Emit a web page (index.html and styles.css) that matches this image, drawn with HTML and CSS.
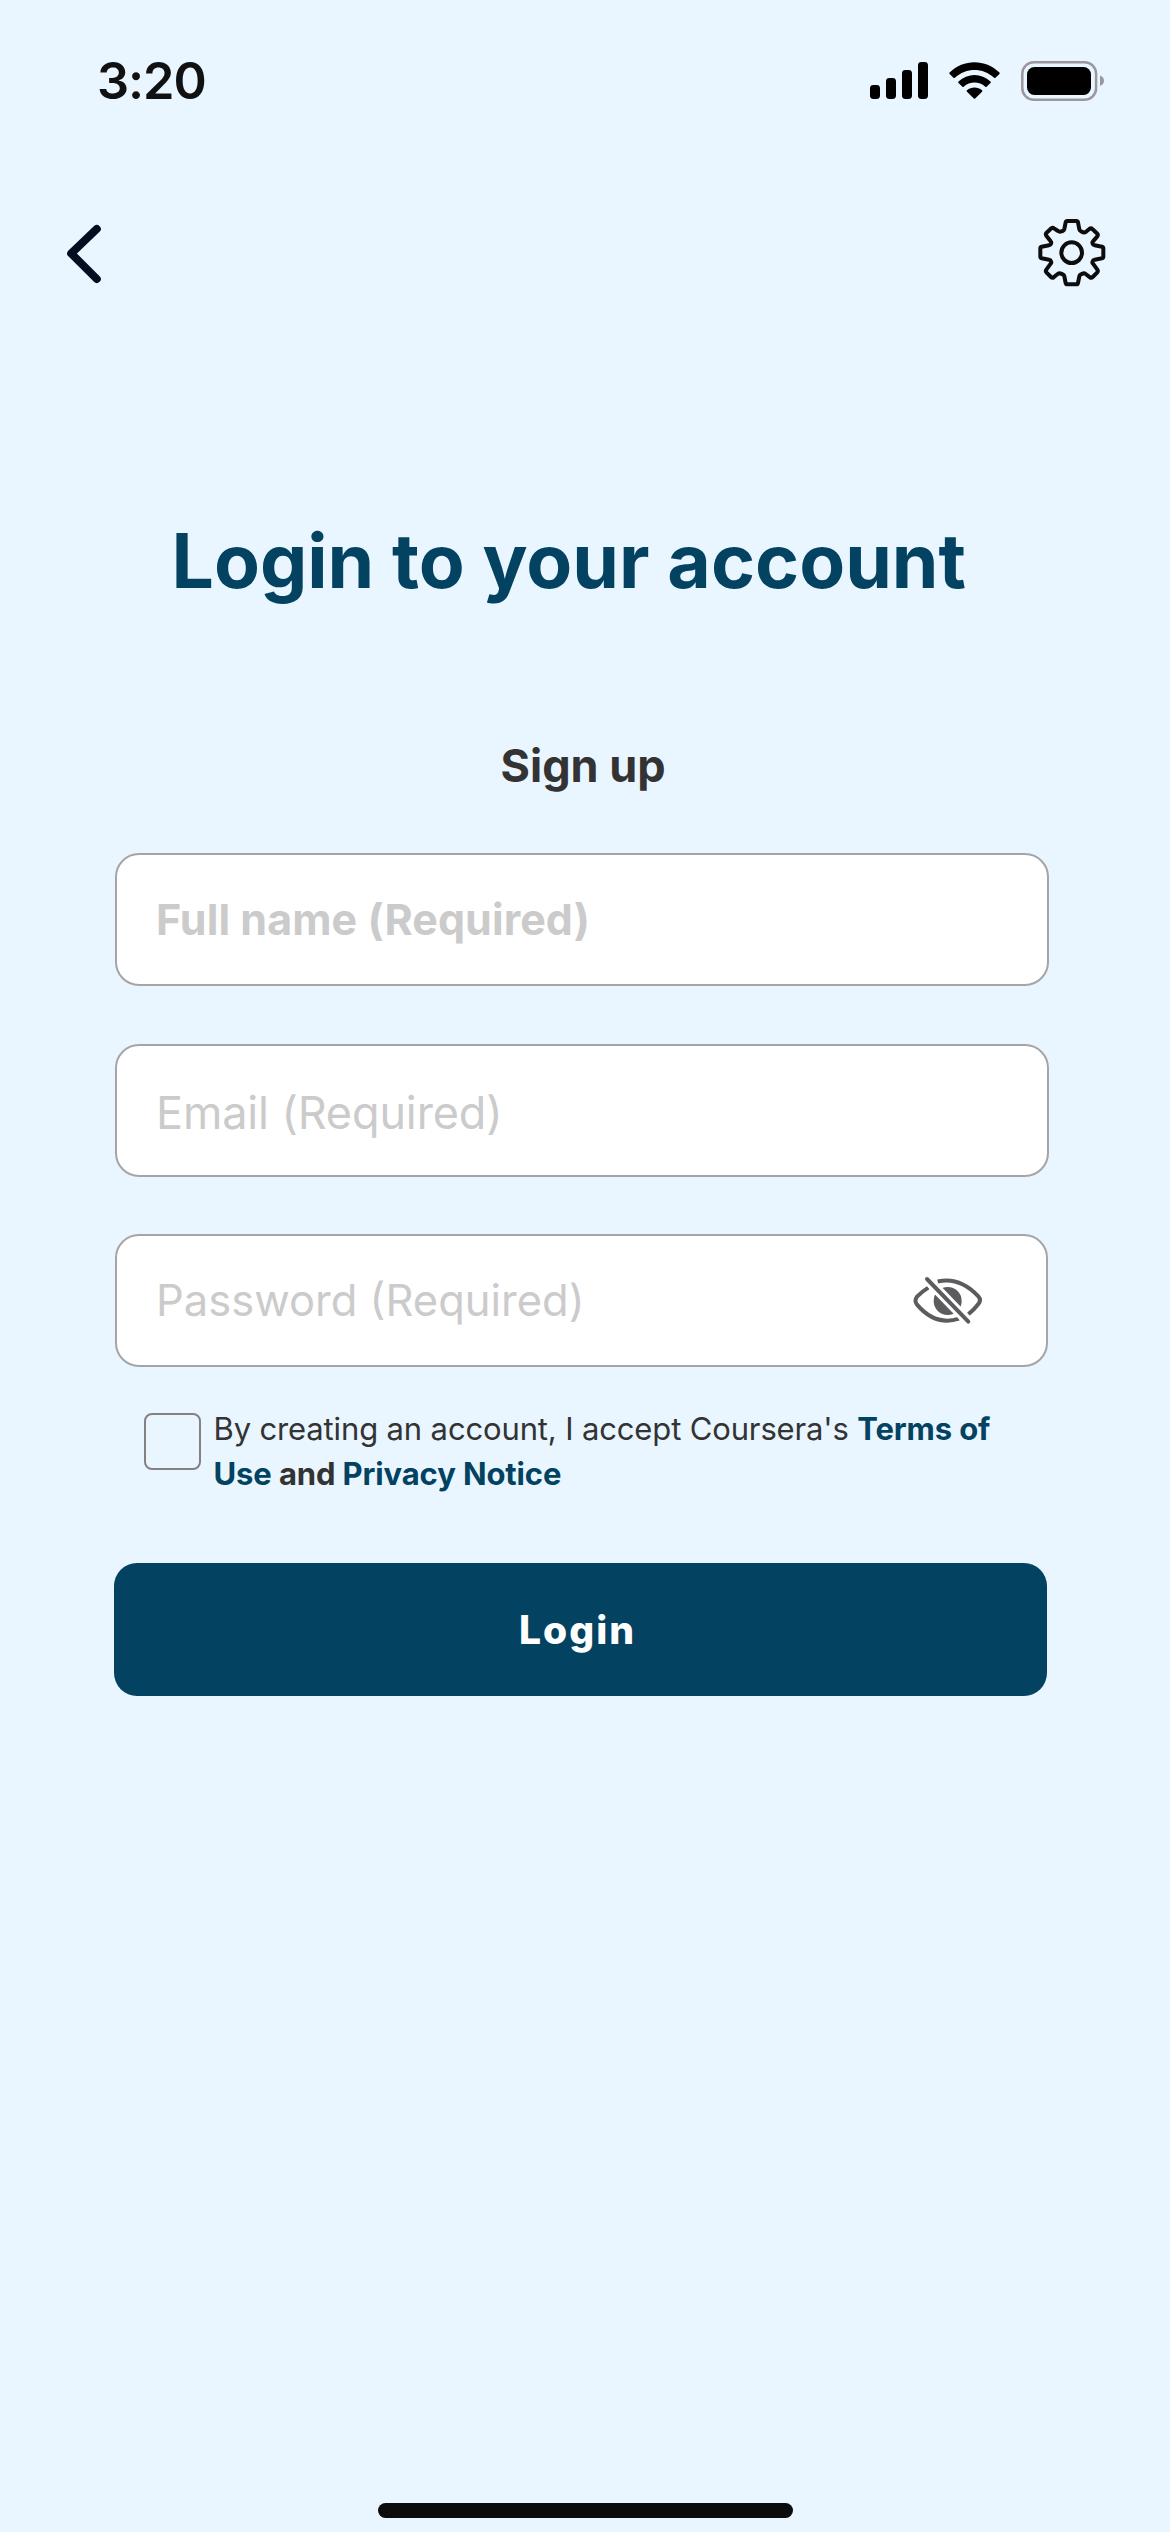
FILE: index.html
```html
<!DOCTYPE html>
<html lang="en">
<head>
<meta charset="utf-8">
<title>Login to your account</title>
<link rel="stylesheet" href="styles.css">
</head>
<body>
<div class="screen">
  <header class="status">
    <span class="time">3:20</span>
    <svg class="signal" viewBox="0 0 58 37" width="58" height="37">
      <rect x="0" y="23" width="10" height="14" rx="3.4"/>
      <rect x="16" y="16" width="10" height="21" rx="3.4"/>
      <rect x="32" y="8" width="10" height="29" rx="3.4"/>
      <rect x="48" y="0" width="10" height="37" rx="3.4"/>
    </svg>
    <svg class="wifi" viewBox="0 0 51 37" width="51" height="37">
      <path d="M.6 10.6C14.5-3.3 36.500-3.300 50.400 10.600Q51 11.300 50.400 12L46.500 15.800Q45.800 16.400 45.100 15.800C34 5.300 17 5.300 5.900 15.800Q5.200 16.400 4.500 15.800L.6 12Q0 11.300 .6 10.600Z"/>
      <path d="M9.500 19.500C18.400 10.800 32.600 10.800 41.500 19.500Q42.200 20.200 41.500 20.900L37.600 24.700Q37 25.300 36.300 24.700C30.200 19.200 20.800 19.200 14.700 24.700Q14 25.300 13.400 24.700L9.500 20.900Q8.800 20.200 9.500 19.500Z"/>
      <path d="M18 28.200C22.200 24.600 28.800 24.600 33 28.200Q33.700 28.900 33 29.700L26.200 36.500Q25.500 37.200 24.800 36.500L18 29.700Q17.300 28.900 18 28.200Z"/>
    </svg>
    <svg class="battery" viewBox="0 0 83 40" width="83" height="40">
      <rect x="1.300" y="1.300" width="73.800" height="37.400" rx="11.500" fill="none" stroke="#9c979f" stroke-width="2.500"/>
      <rect x="6" y="6" width="64" height="28" rx="7.500"/>
      <path d="M79 14.500Q83 16 83 19.800T79 25Z" fill="#9c979f"/>
    </svg>
  </header>

  <nav class="nav">
    <svg viewBox="0 0 80 100" width="80" height="100">
      <path class="back" d="M46.800 28.900 21.200 53.500 46.800 79"/>
    </svg>
    <svg viewBox="0 0 300 300" width="100" height="100">
      <path class="gear" d="M142 63H169Q173 63 174 67L178 88Q179 92 183 94L190 97Q194 98 197 96L209 86Q213 83 217 87L232 101Q235 105 232 109L219 124Q216 127 218 131Q219 135 224 136L246 140Q250 141 250 145V170Q250 174 246 175L224 179Q219 180 218 184Q216 188 219 191L232 209Q235 213 232 217L218 231Q214 235 210 232L197 222Q193 219 190 220L183 223Q179 225 178 229L174 249Q173 253 169 253H142Q138 253 137 249L133 229Q132 225 128 223L121 220Q117 219 113 222L101 232Q97 235 93 231L79 217Q76 213 79 209L92 191Q95 188 93 184Q92 180 87 179L65 175Q61 174 61 170V145Q61 141 65 140L87 136Q92 135 93 131Q95 127 92 124L79 107Q76 103 79 99L94 85Q98 82 102 85L114 93Q118 96 121 95L128 93Q132 91 133 87L137 67Q138 63 142 63Z"/>
      <circle class="gear" cx="155" cy="158" r="31"/>
    </svg>
  </nav>

  <main class="main">
    <h1 class="title">Login to your account</h1>
    <h2 class="subtitle">Sign up</h2>

    <form class="form">
      <div class="field name"><span>Full name (Required)</span></div>
      <div class="field email"><span>Email (Required)</span></div>
      <div class="field password">
        <span>Password (Required)</span>
        <svg viewBox="60 165 220 160" width="73.330" height="53.330">
          <path class="eye" d="M140 187.500C190 176 232 200 262 232Q272 243 262 255Q250 271 232 286M112 206Q94 217 78 233Q69 245 78 257C112 297 155 315 204 299"/>
          <circle cx="170" cy="246" r="42" fill="#5c5b5e"/>
          <path class="cut" d="M108 180 232 308"/>
          <path class="slash" d="M108 180 232 308"/>
        </svg>
      </div>

      <div class="terms">
        <span class="checkbox"></span>
        <p class="copy">By creating an account, I accept Coursera's <b><a>Terms of<br>Use</a> and <a>Privacy Notice</a></b></p>
      </div>

      <button class="submit" type="button">Login</button>
    </form>
  </main>

  <div class="home"></div>
</div>
</body>
</html>
```
FILE: styles.css
```css
* { box-sizing: border-box; }

body {
  margin: 0;
  background: #e9f6ff;
  font-family: Inter, "Liberation Sans", sans-serif;
}

svg { display: block; flex: none; }

.screen {
  display: flex;
  flex-direction: column;
  width: 1170px;
  height: 2532px;
}

.status {
  display: flex;
  align-items: center;
  height: 61px;
  margin-top: 50px;
  padding: 0 66px 0 97px;
}

.time {
  margin-right: auto;
  color: #111;
  font-size: 50.500px;
  font-weight: 600;
  line-height: 61px;
  letter-spacing: -1.100px;
}

.wifi, .battery { margin-left: 21px; }

.nav {
  display: flex;
  justify-content: space-between;
  margin-top: 89px;
  padding: 0 50px;
}

.back {
  fill: none;
  stroke: #020d20;
  stroke-width: 8;
  stroke-linecap: round;
  stroke-linejoin: round;
}

.gear {
  fill: none;
  stroke: #0d0d0d;
  stroke-width: 12;
  stroke-linejoin: round;
}

.main { padding: 216px 0 0 114px; }

.title {
  margin: 0 0 0 57.500px;
  color: #034260;
  font-size: 75px;
  font-weight: 700;
  line-height: 90px;
}

.subtitle {
  margin: 133px 0 0 386.500px;
  color: #333;
  font-size: 45px;
  font-weight: 700;
  line-height: 54px;
}

.form {
  display: flex;
  flex-direction: column;
  margin-top: 60px;
}

.field {
  display: flex;
  align-items: center;
  justify-content: space-between;
  width: 934px;
  height: 133px;
  margin: 0 0 58px 1px;
  padding: 0 62px 0 39px;
  border: 2px solid #a5a5a6;
  border-radius: 24px;
  background: #fff;
  color: #cbcbcb;
  font-weight: 400;
}

.name {
  padding-bottom: 2px;
  font-size: 43px;
  font-weight: 700;
  letter-spacing: 0.060px;
}

.email {
  margin-bottom: 57px;
  padding-top: 4px;
  font-size: 45px;
  letter-spacing: -0.130px;
}

.password {
  width: 933px;
  margin-bottom: 39px;
  font-size: 43.500px;
}

.password span { padding-bottom: 1px; }

.eye, .slash, .cut { fill: none; stroke: #5c5b5e; stroke-width: 12; }
.slash { stroke-linecap: round; }
.cut { stroke: #fff; stroke-width: 30; }

.terms {
  display: flex;
  align-items: flex-start;
  padding-left: 30px;
}

.checkbox {
  width: 57px;
  height: 57px;
  margin-top: 7px;
  border: 2px solid #858082;
  border-radius: 8px;
}

.copy {
  margin: 0 0 0 12.500px;
  color: #333;
  font-size: 31px;
  font-weight: 400;
  line-height: 45px;
  letter-spacing: -0.140px;
  white-space: nowrap;
}

.copy b { font-weight: 700; letter-spacing: -0.120px; }
.copy a { color: #034260; }

.submit {
  width: 933px;
  height: 132.500px;
  margin-top: 67px;
  padding: 0 6px 0 0;
  border: 0;
  border-radius: 23px;
  background: #034260;
  color: #fff;
  font: 800 39px Inter, "Liberation Sans", sans-serif;
  letter-spacing: 1.980px;
}

.home {
  width: 415px;
  height: 15px;
  margin: auto auto 14px 378px;
  border-radius: 8px;
  background: #0c0c0c;
}
```
